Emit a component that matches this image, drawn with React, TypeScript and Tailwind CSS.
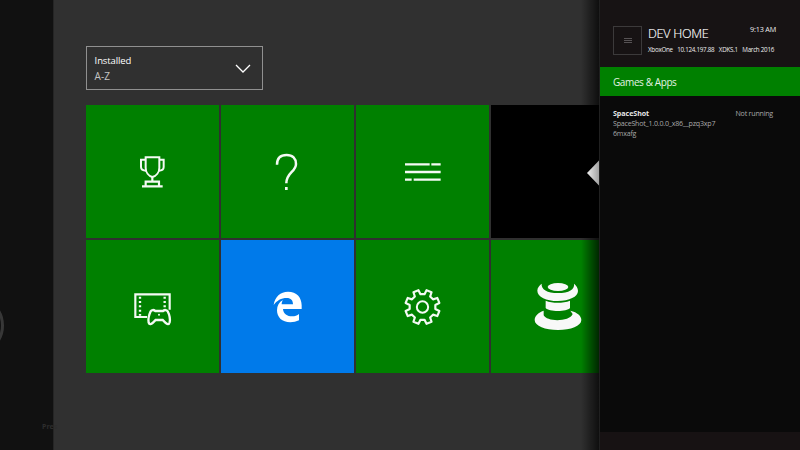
import type { ReactNode } from "react";

function Icon({ children, viewBox = "-102 -105 402 402" }: { children: ReactNode; viewBox?: string }) {
  return (
    <svg viewBox={viewBox} className="block size-[134px]" fill="none" stroke="#f4faf4" strokeWidth="6">
      {children}
    </svg>
  );
}

function Tile({ color = "bg-[#008000]", children }: { color?: string; children?: ReactNode }) {
  return <div className={`size-[133.4px] shrink-0 overflow-hidden ${color}`}>{children}</div>;
}

function Trophy() {
  return (
    <Icon>
      <path d="M77 52H118V83C118 97 109 108 97 111C86 108 77 97 77 83Z" />
      <path d="M77 59H63V81C63 87 68 92 79 92M118 59H131V81C131 87 126 92 116 92" />
      <path d="M97 110V125M77 138V125H117V138M66 139H128" strokeWidth="6.5" />
    </Icon>
  );
}

function Question() {
  return (
    <Icon>
      <path d="M66 74C66 55 77 45 95 45C113 45 123 56 123 72C123 96 94 97 94 130" strokeWidth="7.5" />
      <rect x="90" y="141" width="8" height="9" fill="#f4faf4" stroke="none" />
    </Icon>
  );
}

function Lines() {
  return (
    <Icon>
      <path d="M45 73H119M124 73H152M45 96H152M45 119H65M71 119H152" strokeWidth="7" />
    </Icon>
  );
}

function Media() {
  return (
    <Icon>
      <path d="M81 126H46V58H149V104" strokeWidth="6.5" />
      <path d="M60 65V122M134 65V98" strokeDasharray="6 7" strokeWidth="7" />
      <path d="M92 109C95 104 101 104 106 108H129C134 104 140 104 143 109C148 119 151 132 149 142C147 150 141 148 136 143L128 135H107L99 143C94 148 88 150 86 143C84 134 87 120 92 109Z" strokeWidth="7" />
      <circle cx="117" cy="119" r="3" fill="#f4faf4" stroke="none" />
    </Icon>
  );
}

function Edge() {
  return (
    <Icon>
      <path
        fill="#fff"
        stroke="none"
        d="M56 90C60 65 76 50 99 50C125 50 140 67 140 91V102H84C85 117 97 124 111 124C120 124 127 121 132 117V136C124 140 115 142 106 142C81 142 66 127 66 106C66 92 72 81 84 75C81 79 80 84 80 88H114C114 76 108 69 95 69C79 69 65 77 56 90Z"
      />
    </Icon>
  );
}

function Gear() {
  const points: string[] = [];
  for (let i = 0; i < 8; i++) {
    const base = 22.5 + i * 45;
    const corners: [number, number][] = [
      [-13.5, 39],
      [-9, 52],
      [9, 52],
      [13.5, 39],
    ];
    for (const [offset, radius] of corners) {
      const a = ((base + offset) * Math.PI) / 180;
      points.push(`${97.5 + radius * Math.cos(a)},${96 + radius * Math.sin(a)}`);
    }
  }
  return (
    <Icon>
      <polygon points={points.join(" ")} strokeWidth="6.5" strokeLinejoin="round" />
      <circle cx="97.5" cy="96" r="17" strokeWidth="6" />
    </Icon>
  );
}

function Joystick() {
  return (
    <Icon viewBox="-87 -90 402 402">
      <g fill="#f8f8f8" stroke="none">
        <ellipse cx="114" cy="51" rx="31" ry="12" />
        <path d="M65 41C59 45 52 53 52 62C52 80 79 93 113 93C148 93 174 80 174 63C174 54 169 46 162 41C165 58 147 69 114 69C81 69 63 58 65 41Z" />
        <path d="M77 92C97 100 129 100 150 92V114C141 126 86 126 77 114Z" />
        <path d="M71 122C54 128 44 139 44 150C44 168 76 180 114 180C152 180 184 168 184 150C184 138 173 127 151 122L158 132C149 156 80 156 71 136Z" />
      </g>
    </Icon>
  );
}

export default function App() {
  return (
    <div className="relative flex h-[450px] w-[800px] overflow-hidden bg-[#303030] font-['Open_Sans','Noto_Sans',sans-serif] text-white">
      <aside className="relative w-[54px] shrink-0 overflow-hidden border-r border-[#252525] bg-[#111111]">
        <div className="absolute top-[295px] -left-[57px] size-[61px] rounded-full border-[3px] border-[#373737]" />
      </aside>
      <span className="absolute top-[422px] left-[42px] text-[7px] leading-[10px] font-bold whitespace-nowrap text-[#2d2d2d]">Pres</span>

      <main className="relative w-[546px] shrink-0 overflow-hidden border-r border-[#202020] pt-[46px] pl-[31.6px]">
        <div className="flex h-11 w-[177px] items-center justify-between border border-[#909090] pr-[11px] pl-2">
          <div>
            <div className="text-[9.5px] leading-4 tracking-[-0.1px] text-white">Installed</div>
            <div className="text-[10px] leading-[15px] text-[#c4c4c4]">A-Z</div>
          </div>
          <svg className="h-[9px] w-4" viewBox="0 0 16 9" fill="none" stroke="#fff" strokeWidth="1.3">
            <path d="M1 1L8 8L15 1" />
          </svg>
        </div>
        <div className="mt-[15px] grid w-[538.4px] grid-cols-4 gap-[1.6px]">
          <Tile><Trophy /></Tile>
          <Tile><Question /></Tile>
          <Tile><Lines /></Tile>
          <Tile color="bg-black" />
          <Tile><Media /></Tile>
          <Tile color="bg-[#007aea]"><Edge /></Tile>
          <Tile><Gear /></Tile>
          <Tile><Joystick /></Tile>
        </div>
        <div className="absolute inset-y-0 right-0 w-[18px] bg-linear-to-r from-transparent to-black/70" />
        <svg className="absolute top-[160px] right-0 h-[26px] w-3" viewBox="0 0 12 26">
          <defs>
            <linearGradient id="arrow">
              <stop offset="0" stopColor="#eeeeee" />
              <stop offset="1" stopColor="#a2a2a2" />
            </linearGradient>
          </defs>
          <path d="M12 .5V25.5L0 13Z" fill="url(#arrow)" />
        </svg>
      </main>

      <section className="flex w-[200px] shrink-0 flex-col bg-[#0a0a0a]">
        <header className="flex h-[67px] shrink-0 bg-[#171314] pt-[26px] pl-[13px]">
          <div className="flex size-[29px] shrink-0 items-center justify-center border border-[#3c3a3b]">
            <svg className="h-[5px] w-2" viewBox="0 0 8 5" stroke="#686566" strokeWidth=".8">
              <path d="M0 .5H8M0 2.5H8M0 4.5H8" />
            </svg>
          </div>
          <div className="ml-[6px] w-[128px]">
            <div className="flex h-[18px] justify-between">
              <h1 className="text-[12.5px] leading-[15px] font-light tracking-[-0.25px] whitespace-nowrap [-webkit-text-stroke:0.15px_white]">DEV HOME</h1>
              <time className="-mt-[2px] text-[7.25px] leading-[10px] tracking-[-0.2px] text-[#eeeeee]">9:13 AM</time>
            </div>
            <div className="flex h-[10px] w-[126px] justify-between text-[6.25px] leading-[11px] tracking-[-0.27px] whitespace-nowrap text-[#eeeeee]">
              <span>XboxOne</span>
              <span>10.124.197.88</span>
              <span>XDKS.1</span>
              <span>March 2016</span>
            </div>
          </div>
        </header>
        <h2 className="h-[29px] shrink-0 bg-[#008000] pl-[13px] text-[10px] leading-[31px] tracking-[-0.4px] text-[#e4f2e4]">Games &amp; Apps</h2>
        <div className="flex justify-between pt-[12px] pr-[27px] pl-[13px] text-[7.1px] leading-[10px] tracking-[-0.22px] text-[#a8a8a8]">
          <div className="w-[104px]">
            <div className="font-bold tracking-[-0.05px] text-[#e6e6e6]">SpaceShot</div>
            <div className="whitespace-nowrap">SpaceShot_1.0.0.0_x86__pzq3xp7<br />6mxafg</div>
          </div>
          <div className="whitespace-nowrap">Not running</div>
        </div>
        <footer className="mt-auto h-[18px] bg-[#171213]" />
      </section>
    </div>
  );
}
